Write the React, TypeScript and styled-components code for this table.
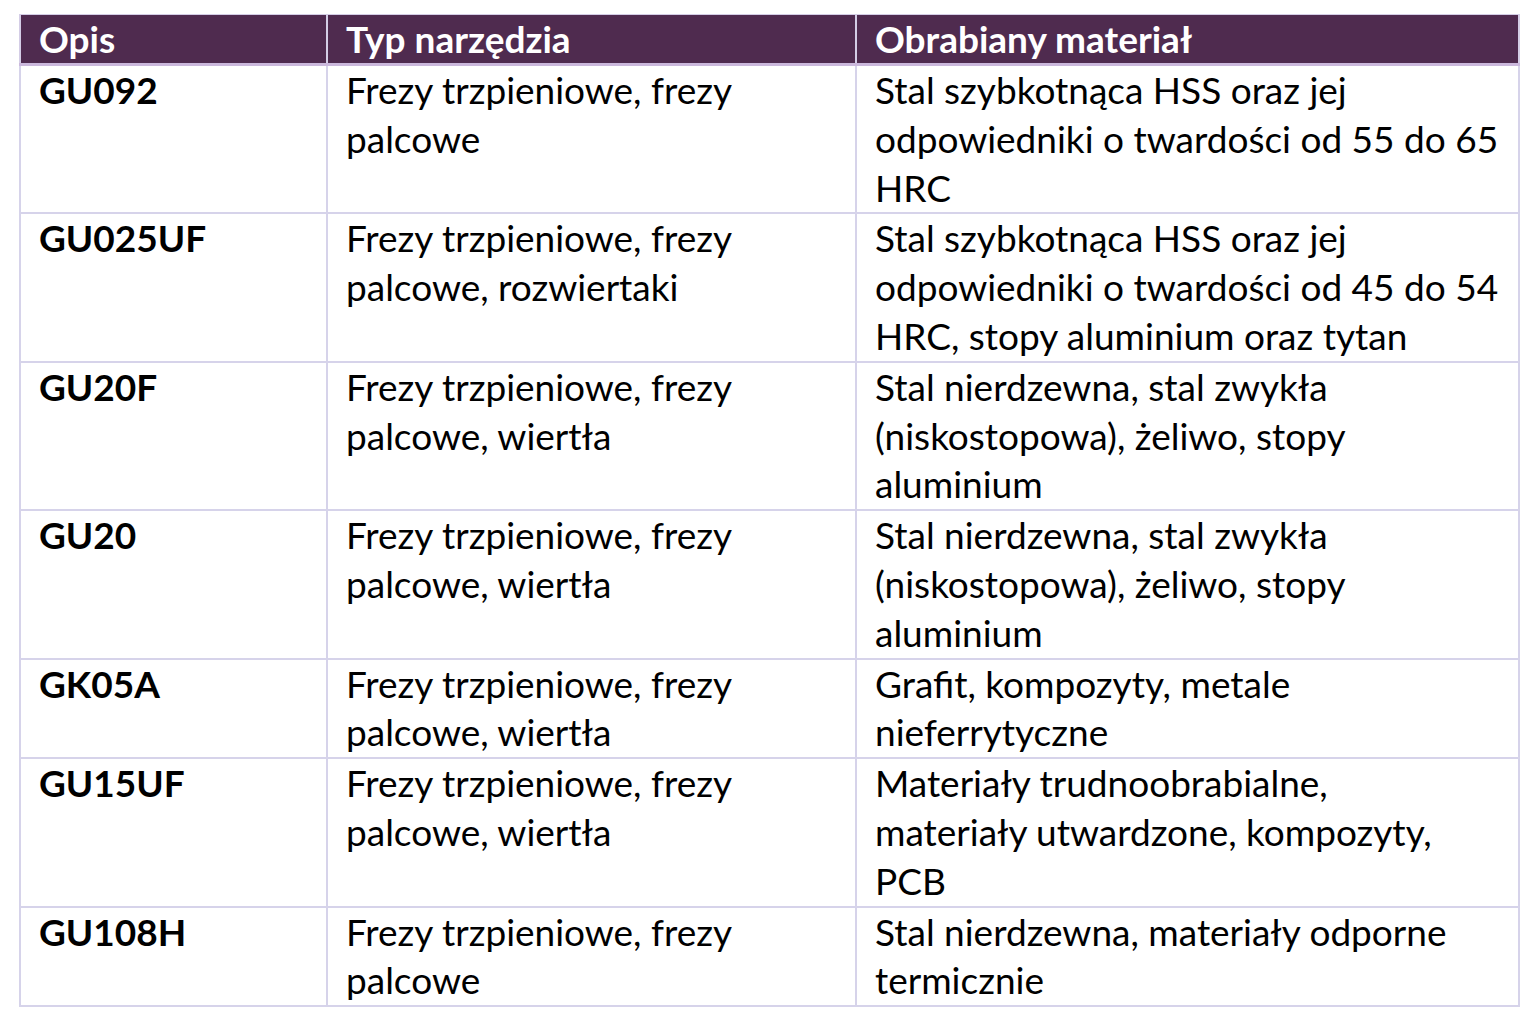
import React from 'react';
import styled, { createGlobalStyle } from 'styled-components';

const GlobalStyle = createGlobalStyle`
  body {
    margin: 0;
    background: #ffffff;
    font-family: Lato, "Noto Sans", sans-serif;
  }
`;

type Row = { code: string; tool: string[]; material: string[] };

const rows: Row[] = [
  {
    code: 'GU092',
    tool: ['Frezy trzpieniowe, frezy', 'palcowe'],
    material: ['Stal szybkotnąca HSS oraz jej', 'odpowiedniki o twardości od 55 do 65', 'HRC'],
  },
  {
    code: 'GU025UF',
    tool: ['Frezy trzpieniowe, frezy', 'palcowe, rozwiertaki'],
    material: ['Stal szybkotnąca HSS oraz jej', 'odpowiedniki o twardości od 45 do 54', 'HRC, stopy aluminium oraz tytan'],
  },
  {
    code: 'GU20F',
    tool: ['Frezy trzpieniowe, frezy', 'palcowe, wiertła'],
    material: ['Stal nierdzewna, stal zwykła', '(niskostopowa), żeliwo, stopy', 'aluminium'],
  },
  {
    code: 'GU20',
    tool: ['Frezy trzpieniowe, frezy', 'palcowe, wiertła'],
    material: ['Stal nierdzewna, stal zwykła', '(niskostopowa), żeliwo, stopy', 'aluminium'],
  },
  {
    code: 'GK05A',
    tool: ['Frezy trzpieniowe, frezy', 'palcowe, wiertła'],
    material: ['Grafit, kompozyty, metale', 'nieferrytyczne'],
  },
  {
    code: 'GU15UF',
    tool: ['Frezy trzpieniowe, frezy', 'palcowe, wiertła'],
    material: ['Materiały trudnoobrabialne,', 'materiały utwardzone, kompozyty,', 'PCB'],
  },
  {
    code: 'GU108H',
    tool: ['Frezy trzpieniowe, frezy', 'palcowe'],
    material: ['Stal nierdzewna, materiały odporne', 'termicznie'],
  },
];

const Page = styled.div`
  padding: 14px 0 0 19px;
`;

const Table = styled.table`
  border-collapse: collapse;
  table-layout: fixed;
  width: 1499px;
  color: #000000;
  font-size: 37px;
`;

const HeadRow = styled.tr`
  background: #4f2b4f;
`;

const HeadCell = styled.th<{ $width: number }>`
  box-sizing: border-box;
  width: ${(p) => p.$width}px;
  padding: 0 18px 1px;
  border: 2px solid #d4cde6;
  border-top-width: 1px;
  border-bottom: 3px solid #cbb8dc;
  text-align: left;
  font-weight: 700;
  color: #ffffff;
  line-height: 47px;
  white-space: nowrap;
`;

const Cell = styled.td<{ $bold?: boolean }>`
  padding: 0 18px;
  border: 2px solid #d6d3ea;
  vertical-align: top;
  font-weight: ${(p) => (p.$bold ? 700 : 400)};
  line-height: 48.8px;
  white-space: nowrap;
`;

const Line = styled.div``;

const App = () => (
  <>
    <GlobalStyle />
    <Page>
      <Table>
        <thead>
          <HeadRow>
            <HeadCell $width={307}>Opis</HeadCell>
            <HeadCell $width={529}>Typ narzędzia</HeadCell>
            <HeadCell $width={663}>Obrabiany materiał</HeadCell>
          </HeadRow>
        </thead>
        <tbody>
          {rows.map((r) => (
            <tr key={r.code}>
              <Cell $bold>{r.code}</Cell>
              <Cell>
                {r.tool.map((t) => (
                  <Line key={t}>{t}</Line>
                ))}
              </Cell>
              <Cell>
                {r.material.map((m) => (
                  <Line key={m}>{m}</Line>
                ))}
              </Cell>
            </tr>
          ))}
        </tbody>
      </Table>
    </Page>
  </>
);

export default App;
